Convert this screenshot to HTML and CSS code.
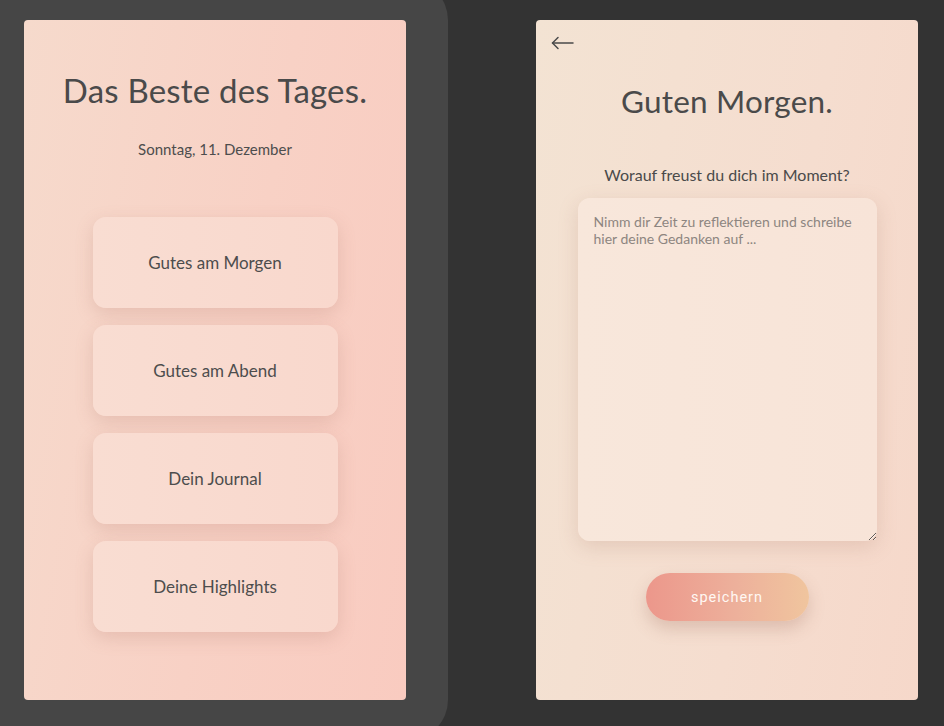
FILE: index.html
```html
<!DOCTYPE html>
<html lang="de">
<head>
<meta charset="utf-8">
<title>Das Beste des Tages</title>
<link rel="stylesheet" href="styles.css">
</head>
<body>
<div class="stage">
  <div class="left-frame">
    <section class="card card-home">
      <h1 class="title">Das Beste des Tages.</h1>
      <p class="date">Sonntag, 11. Dezember</p>
      <nav class="menu">
        <a class="menu-item">Gutes am Morgen</a>
        <a class="menu-item">Gutes am Abend</a>
        <a class="menu-item">Dein Journal</a>
        <a class="menu-item">Deine Highlights</a>
      </nav>
    </section>
  </div>
  <div class="right-frame">
    <section class="card card-entry">
      <div class="topbar">
        <svg class="back" width="24" height="14" viewBox="0 0 24 14" fill="none" stroke="#4a4a4a" stroke-width="1.5" stroke-linecap="round" stroke-linejoin="round">
          <path d="M1.5 7H22"/>
          <path d="M7 1.5L1.5 7L7 12.5"/>
        </svg>
      </div>
      <h1 class="title title-entry">Guten Morgen.</h1>
      <p class="question">Worauf freust du dich im Moment?</p>
      <textarea class="entry" placeholder="Nimm dir Zeit zu reflektieren und schreibe hier deine Gedanken auf ..."></textarea>
      <button class="save">speichern</button>
    </section>
  </div>
</div>
</body>
</html>
```
FILE: styles.css
```css
* { box-sizing: border-box; }
html, body {
  margin: 0;
  padding: 0;
  background: #333333;
  overflow: hidden;
  height: 726px;
}
body {
  font-family: "Lato", "Noto Sans", sans-serif;
  color: #4b4b4b;
}
.stage {
  display: flex;
  height: 726px;
}
.left-frame {
  width: 448px;
  height: 760px;
  margin-top: -20px;
  padding: 40px 42px 0 24px;
  background: #464646;
  border-radius: 0 40px 40px 0;
  flex-shrink: 0;
}
.right-frame {
  padding: 20px 0 0 88px;
}
.card {
  width: 382px;
  height: 680px;
  border-radius: 4px;
  display: flex;
  flex-direction: column;
  align-items: center;
}
.card-home {
  background: linear-gradient(100deg, #f6dacc 0%, #f8d1c5 55%, #f9cbc0 100%);
  padding-top: 50px;
}
.title {
  margin: 0;
  font-weight: 400;
  font-size: 33px;
  line-height: 40px;
  color: #4a4a4a;
  letter-spacing: 0.2px;
}
.date {
  margin: 29px 0 0;
  font-size: 15px;
  line-height: 20px;
  color: #4d4d4d;
}
.menu {
  margin-top: 58px;
  display: flex;
  flex-direction: column;
  gap: 17px;
}
.menu-item {
  width: 245px;
  height: 91px;
  border-radius: 13px;
  background: linear-gradient(90deg, #f9ddd2 0%, #f9d8cd 100%);
  box-shadow: 0 6px 18px rgba(170, 110, 95, 0.22);
  display: flex;
  align-items: center;
  justify-content: center;
  font-size: 17px;
  color: #4d4d4d;
}
.card-entry {
  background: linear-gradient(100deg, #f3e3d3 0%, #f5ddcf 60%, #f6d8ca 100%);
}
.topbar {
  align-self: stretch;
  padding: 16px 0 0 15px;
  height: 30px;
}
.back { display: block; }
.title-entry {
  margin-top: 31px;
  font-size: 31.5px;
}
.question {
  margin: 43px 0 0;
  font-size: 16px;
  line-height: 22px;
  color: #4a4a4a;
}
.entry {
  margin-top: 12px;
  width: 299px;
  height: 343px;
  border: none;
  border-radius: 12px;
  background: linear-gradient(90deg, #f8e7db 0%, #f8e4d8 100%);
  box-shadow: 0 6px 20px rgba(170, 120, 100, 0.22);
  padding: 15px 16px;
  font-family: "Lato", "Noto Sans", sans-serif;
  font-size: 14px;
  line-height: 17px;
  color: #4a4a4a;
  outline: none;
}
.entry::placeholder { color: #8d8580; }
.save {
  margin-top: 32px;
  width: 163px;
  height: 48px;
  border: none;
  border-radius: 24px;
  background: linear-gradient(90deg, #ec978b 0%, #edb09b 55%, #f0c59e 100%);
  box-shadow: 0 8px 16px rgba(150, 100, 85, 0.25);
  color: #fff8f3;
  font-family: "Roboto", "Liberation Sans", sans-serif;
  font-size: 14.5px;
  letter-spacing: 1px;
}
```
